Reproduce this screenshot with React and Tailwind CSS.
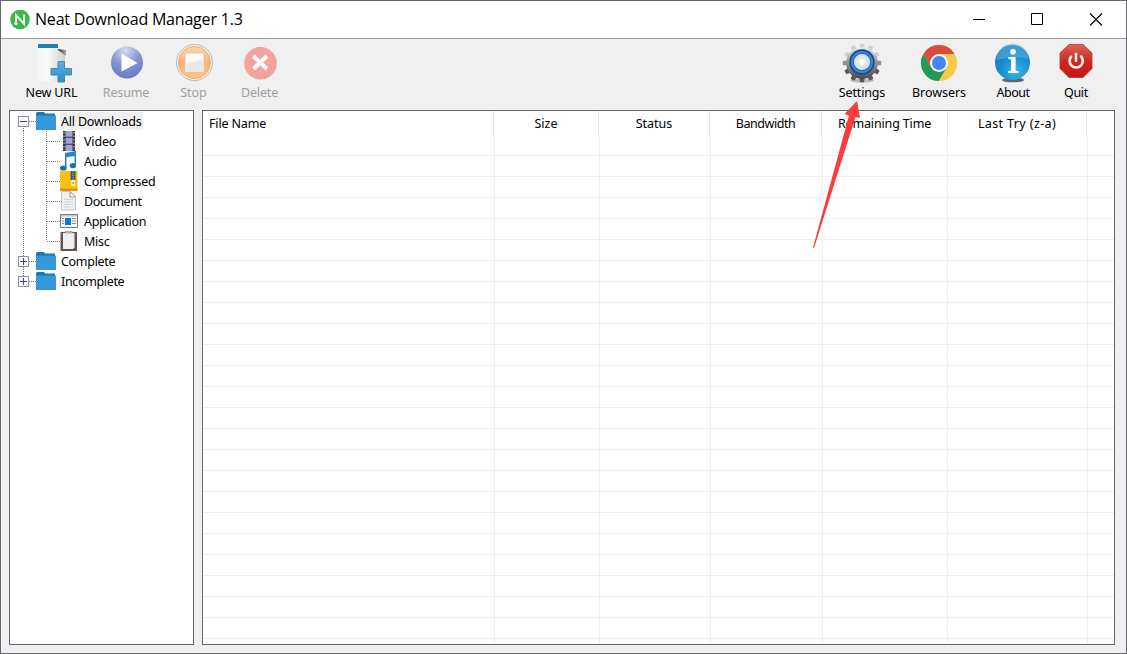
import React from 'react';

const tahoma = "font-['Noto_Sans',sans-serif]";

const NeatLogo = () => (
  <svg width="20" height="20" viewBox="0 0 20 20">
    <circle cx="10" cy="9.5" r="9.8" fill="#3eb549" />
    <path d="M6 12.5V5.2L14 14V4.6" fill="none" stroke="#e6f7e6" strokeWidth="2" />
    <circle cx="5.9" cy="13.6" r="1.7" fill="#e6f7e6" />
  </svg>
);

const NewUrlIcon = () => (
  <svg width="40" height="40" viewBox="0 0 40 40">
    <defs>
      <linearGradient id="page" x1="0" x2="1"><stop offset="0" stopColor="#f6f6f6" /><stop offset=".4" stopColor="#fafafa" /><stop offset="1" stopColor="#cfcfcf" /></linearGradient>
      <linearGradient id="fold" x1="0" x2="1"><stop offset="0" stopColor="#333" /><stop offset="1" stopColor="#aaa" /></linearGradient>
      <linearGradient id="plus" x1="0" y1="0" x2="0" y2="1"><stop offset="0" stopColor="#58b4e4" /><stop offset="1" stopColor="#2a8bc6" /></linearGradient>
    </defs>
    <path d="M6 1h20v6h7v31H6z" fill="url(#page)" />
    <path d="M6 1h20v4H6z" fill="#1d7db4" />
    <path d="M26 6l8 1v6l-8-6z" fill="url(#fold)" />
    <path d="M26 18.5h6.5v7h7v6.5h-7v7H26v-7h-7v-6.5h7z" fill="url(#plus)" stroke="#4a88a8" strokeWidth="1" />
  </svg>
);

const ResumeIcon = () => (
  <svg width="40" height="40" viewBox="0 0 40 40">
    <defs><radialGradient id="res" cx=".45" cy=".12" r=".9"><stop offset="0" stopColor="#d6dcf3" /><stop offset=".5" stopColor="#8797d2" /><stop offset="1" stopColor="#6878c6" /></radialGradient></defs>
    <circle cx="21" cy="19.5" r="16" fill="url(#res)" />
    <path d="M15.5 10.5v18L31.5 20z" fill="#fff" />
  </svg>
);

const StopIcon = () => (
  <svg width="40" height="40" viewBox="0 0 40 40">
    <defs><linearGradient id="stp" x1="0" y1="0" x2="0" y2="1"><stop offset="0" stopColor="#fbd5ad" /><stop offset=".5" stopColor="#f8b477" /><stop offset="1" stopColor="#fcc983" /></linearGradient></defs>
    <circle cx="20.5" cy="19.5" r="18" fill="#f4f1ee" stroke="#b9b9b9" strokeWidth="1" />
    <circle cx="20.5" cy="19.5" r="16" fill="url(#stp)" stroke="#f3a966" strokeWidth="1" />
    <path d="M11.5 10.5h18v18h-18z" fill="#fafafa" />
    <path d="M11.5 21l18-5v12.5h-18z" fill="#e9e9e9" />
  </svg>
);

const DeleteIcon = () => (
  <svg width="40" height="40" viewBox="0 0 40 40">
    <circle cx="20.5" cy="20.2" r="16.3" fill="#f3a29c" />
    <path d="M13.5 13L27 26M27 13L13.5 26" stroke="#fff" strokeWidth="4" />
  </svg>
);

const SettingsIcon = () => (
  <svg width="40" height="40" viewBox="0 0 40 40">
    <defs>
      <linearGradient id="gear" x1="0" y1="0" x2="0" y2="1"><stop offset="0" stopColor="#eeeeee" /><stop offset=".4" stopColor="#a0a0a0" /><stop offset="1" stopColor="#4c4c4c" /></linearGradient>
      <radialGradient id="hub"><stop offset="0" stopColor="#fff" /><stop offset="1" stopColor="#c9d6e4" /></radialGradient>
    </defs>
    <ellipse cx="20" cy="37.5" rx="12" ry="2" fill="#bbb" />
    {[0, 30, 60, 90, 120, 150, 180, 210, 240, 270, 300, 330].map((a) => (
      <path key={a} d="M17.4 5L18 .8h4l.6 4.2z" fill={a > 90 && a < 270 ? '#565656' : a === 90 || a === 270 ? '#909090' : '#d0d0d0'} transform={`rotate(${a} 20 20)`} />
    ))}
    <circle cx="20" cy="20" r="15.8" fill="url(#gear)" />
    <circle cx="20" cy="19" r="12.7" fill="#164b96" />
    <circle cx="20" cy="19" r="10" fill="none" stroke="#3b86d4" strokeWidth="2" />
    <circle cx="20" cy="19" r="8.3" fill="url(#hub)" />
    <circle cx="20" cy="19" r="3.6" fill="#fff" stroke="#cfdbe6" strokeWidth=".8" />
  </svg>
);

const ChromeIcon = () => (
  <svg width="40" height="40" viewBox="0 0 40 40">
    <circle cx="20" cy="20" r="18" fill="#fac84a" />
    <path d="M20 11H35.6A18 18 0 0 0 4.4 11L12.2 24.5z" fill="#db4a3e" />
    <path d="M4.4 11A18 18 0 0 0 20 38L27.8 24.5 12.2 24.5z" fill="#219a57" />
    <path d="M20 38A18 18 0 0 0 35.6 11H20L27.8 24.5z" fill="#fac84a" />
    <circle cx="20" cy="20" r="9" fill="#f5f5f5" />
    <circle cx="20" cy="20" r="7" fill="#4285f4" />
  </svg>
);

const AboutIcon = () => (
  <svg width="40" height="40" viewBox="0 0 40 40">
    <defs><radialGradient id="abt" cx=".6" cy=".75" r=".85"><stop offset="0" stopColor="#35b5ec" /><stop offset=".55" stopColor="#168bcb" /><stop offset="1" stopColor="#1874b4" /></radialGradient></defs>
    <ellipse cx="20" cy="37" rx="11" ry="2.3" fill="#666" />
    <circle cx="19.5" cy="19.5" r="17.5" fill="url(#abt)" />
    <path d="M3.5 17a16 16 0 0 1 32-1Q22 12 3.5 17z" fill="#62b8e3" opacity=".5" />
    <circle cx="20" cy="8.8" r="2.8" fill="#fff" />
    <path d="M15 14h7.6v13.5l3 .8V30H15v-1.7l3-.8V16.4l-3-.6z" fill="#fff" />
  </svg>
);

const QuitIcon = () => (
  <svg width="40" height="40" viewBox="0 0 40 40">
    <defs><linearGradient id="qt" x1="0" y1="0" x2="0" y2="1"><stop offset="0" stopColor="#dc6258" /><stop offset=".5" stopColor="#cb2a22" /><stop offset="1" stopColor="#c5120c" /></linearGradient></defs>
    <path d="M13 1.5h14L36 10v15.5l-9 9H13l-9-9V10z" fill="url(#qt)" stroke="#b73830" strokeWidth=".8" />
    <path d="M15.8 13a6.6 6.6 0 1 0 8.6-.2" fill="none" stroke="#fbeceb" strokeWidth="2.7" />
    <path d="M20 10v9" stroke="#fbeceb" strokeWidth="2.5" />
  </svg>
);

const Folder = () => (
  <svg width="20" height="20" viewBox="0 0 20 20">
    <path d="M0 2.5L1 1h7l1 1.5h10V6H0z" fill="#1c75b3" />
    <path d="M0 4.5h20V19H0z" fill="#3498db" />
  </svg>
);

const Video = () => (
  <svg width="20" height="20" viewBox="0 0 20 20">
    <path d="M3 0h12v20H3z" fill="#36363d" />
    <path d="M5.5 0h7v5.8h-7zM5.5 6.8h7v6h-7zM5.5 13.8h7V20h-7z" fill="#9ea0df" />
    <path d="M4 1v18M14 1v18" stroke="#ddd" strokeWidth="1" strokeDasharray="1.5 2" />
  </svg>
);

const Audio = () => (
  <svg width="20" height="20" viewBox="0 0 20 20">
    <path d="M5 2L16 0v14h-1.5V5L6.5 6.2V17H5z" fill="#2387bd" />
    <ellipse cx="3.3" cy="17" rx="3.3" ry="2.6" fill="#1672ae" />
    <ellipse cx="12.9" cy="14.5" rx="3.2" ry="2.6" fill="#1672ae" />
  </svg>
);

const Compressed = () => (
  <svg width="20" height="20" viewBox="0 0 20 20">
    <path d="M0 0h17.5v20H0z" fill="#fcc010" />
    <path d="M0 17.5h17.5V20H0z" fill="#e78c21" />
    <path d="M10.5 0h5v9h-5z" fill="#405a70" />
    <path d="M13 0v9" stroke="#a9c4d4" strokeDasharray="1 1" />
    <path d="M11.3 9h3.6v6h-3.6z" fill="#f5e8c4" />
    <path d="M12.6 11h1.2v2h-1.2z" fill="#ad9039" />
  </svg>
);

const Document = () => (
  <svg width="20" height="20" viewBox="0 0 20 20">
    <path d="M1.5.5H10L15.5 6v13h-14z" fill="#f0f0f0" stroke="#c4c4c4" />
    <path d="M10 .5V6h5.5z" fill="#fff" stroke="#999" />
    <path d="M4 8.5h9M4 11h9M4 13.5h9M4 16h7" stroke="#d2d2d2" />
  </svg>
);

const Application = () => (
  <svg width="20" height="20" viewBox="0 0 20 20">
    <path d="M.5 3.5h17v13H.5z" fill="#f6f8fa" stroke="#727d86" />
    <path d="M1 4h16v1.5H1z" fill="#c1c9ce" />
    <path d="M5 7h6v7H5z" fill="#0b78d8" />
    <path d="M2 7.5h2M2 10h2M2 12.5h2M12 7.5h4M12 10h4M12 12.5h4" stroke="#7f95a6" />
  </svg>
);

const Misc = () => (
  <svg width="20" height="20" viewBox="0 0 20 20">
    <path d="M.5 1H17v19H.5z" fill="#675348" />
    <path d="M3 2h11.5v14.5L13 18H3z" fill="#efeff1" />
    <path d="M5 0h7.5v2.5H5z" fill="#aaa" />
  </svg>
);

// One row's share of the dotted guide lines, with the expander box where the row has one.
const Guide = ({ kind }) => {
  if (kind === 'child' || kind === 'lastChild') {
    return (
      <svg width="50" height="20" viewBox="0 0 50 20" fill="none" shapeRendering="crispEdges">
        <path d={kind === 'child' ? 'M13.5 0v20M36.5 0v20M37 10.5h13' : 'M13.5 0v20M36.5 0v10M37 10.5h13'} stroke="#777" strokeDasharray="1 1" />
      </svg>
    );
  }
  return (
    <svg width="26" height="20" viewBox="0 0 26 20" fill="none" shapeRendering="crispEdges">
      <g stroke="#777" strokeDasharray="1 1">
        <path d="M19 10.5h7" />
        {kind === 'open' && <path d="M13.5 15v5" />}
        {kind === 'closed' && <path d="M13.5 0v20" />}
        {kind === 'last' && <path d="M13.5 0v6" />}
      </g>
      <path d="M8.5 5.5h10v10h-10z" fill="#f8f8f8" stroke="#919191" />
      <path d="M10 10.5h7" stroke="#30508f" />
      {kind !== 'open' && <path d="M13.5 7v7" stroke="#30508f" />}
    </svg>
  );
};

const tree = [
  { label: 'All Downloads', kind: 'open', Icon: Folder, text: 'ml-1 bg-[#f0f0f0] tracking-[-0.2px]' },
  { label: 'Video', kind: 'child', Icon: Video, text: 'ml-[3px] tracking-[-0.15px]' },
  { label: 'Audio', kind: 'child', Icon: Audio, text: 'ml-[3px] tracking-[-0.35px]' },
  { label: 'Compressed', kind: 'child', Icon: Compressed, text: 'ml-[3px] tracking-[-0.2px]' },
  { label: 'Document', kind: 'child', Icon: Document, text: 'ml-[3px] tracking-[-0.5px]' },
  { label: 'Application', kind: 'child', Icon: Application, text: 'ml-[3px] tracking-[-0.35px]' },
  { label: 'Misc', kind: 'lastChild', Icon: Misc, text: 'ml-[3px] tracking-[-0.25px]' },
  { label: 'Complete', kind: 'closed', Icon: Folder, text: 'ml-1 tracking-[-0.3px]' },
  { label: 'Incomplete', kind: 'last', Icon: Folder, text: 'ml-1 tracking-[-0.35px]' },
];

const columns = [
  { label: 'File Name', head: 'w-[291px] justify-start pl-1.5 tracking-[-0.15px]', body: 'w-[292px]' },
  { label: 'Size', head: 'w-[105px] justify-center', body: 'w-[105px]' },
  { label: 'Status', head: 'w-[111px] justify-center', body: 'w-[111px]' },
  { label: 'Bandwidth', head: 'w-[112px] justify-center tracking-[-0.45px]', body: 'w-[112px]' },
  { label: 'Remaining Time', head: 'w-[126px] justify-center tracking-[-0.15px]', body: 'w-[125px]' },
  { label: 'Last Try (z-a)', head: 'w-[139px] justify-center tracking-[0.38px]', body: 'w-[140px]' },
];

const Tool = ({ label, Icon, size }) => (
  <button className={`flex flex-col items-center ${size}`}>
    <Icon />
    <span className="mt-px h-[18px] whitespace-nowrap leading-[18px]">{label}</span>
  </button>
);

export default function App() {
  return (
    <div className={`relative flex h-[654px] w-[1127px] flex-col overflow-hidden border border-[#646872] bg-[#f0f0f0] text-[12.5px] text-black ${tahoma}`}>
      <header className="flex h-[38px] shrink-0 items-center border-b border-[#999] bg-white pl-[9px]">
        <NeatLogo />
        <h1 className="mb-px ml-[5px] flex-1 whitespace-nowrap font-['Open_Sans',sans-serif] text-[16px] tracking-[-0.2px]">Neat Download Manager 1.3</h1>
        <svg width="153" height="37" viewBox="0 0 153 37" fill="none" stroke="#000">
          <path d="M0 18.5h12" />
          <path d="M58.5 12.5h11v11h-11z" />
          <path d="M117 12.5l12 12M129 12.5l-12 12" strokeWidth="1.2" />
        </svg>
      </header>

      <nav className="flex h-[71px] shrink-0 pl-[17px] pt-[4px]">
        <Tool label="New URL" Icon={NewUrlIcon} size="w-[67px] tracking-[-0.15px]" />
        <Tool label="Resume" Icon={ResumeIcon} size="w-[82px] tracking-[-0.15px] text-[#a0a0a0]" />
        <Tool label="Stop" Icon={StopIcon} size="w-[53px] text-[#a0a0a0]" />
        <Tool label="Delete" Icon={DeleteIcon} size="w-[79px] tracking-[-0.15px] text-[#a0a0a0]" />
        <div className="w-[524px]" />
        <Tool label="Settings" Icon={SettingsIcon} size="w-[78px] tracking-[-0.15px]" />
        <Tool label="Browsers" Icon={ChromeIcon} size="w-[76px] tracking-[-0.05px]" />
        <Tool label="About" Icon={AboutIcon} size="w-[72px] tracking-[-0.45px]" />
        <Tool label="Quit" Icon={QuitIcon} size="w-[54px] tracking-[-0.3px]" />
      </nav>

      <main className="flex h-[535px] gap-2 pl-2">
        <aside className="w-[185px] border border-[#64646a] bg-white">
          {tree.map(({ label, kind, Icon, text }) => (
            <div key={label} className="flex h-5 items-center">
              <Guide kind={kind} />
              <Icon />
              <span className={`flex h-[18px] items-center whitespace-nowrap px-[1px] pt-[2px] ${text}`}>{label}</span>
            </div>
          ))}
        </aside>

        <section className="flex w-[913px] flex-col border border-[#64646a] bg-white">
          <div className="flex h-[25px] shrink-0">
            {columns.map(({ label, head }) => (
              <div key={label} className={`flex shrink-0 items-center whitespace-nowrap border-r border-[#e5e5e5] pt-[2px] ${head}`}>{label}</div>
            ))}
          </div>
          <div className="flex flex-1 flex-col overflow-hidden">
            {Array.from({ length: 25 }, (_, row) => (
              <div key={row} className={`flex shrink-0 border-b border-[#efefef] ${row === 0 ? 'h-[20px]' : 'h-[21px]'}`}>
                {columns.map(({ label, body }) => (
                  <div key={label} className={`shrink-0 border-r border-[#efefef] ${body}`} />
                ))}
              </div>
            ))}
          </div>
        </section>
      </main>

      <svg className="pointer-events-none absolute left-[799px] top-[89px]" width="80" height="165" viewBox="0 0 80 165">
        <path d="M57 11L60 28 55.5 27 14 158 13 157.5 49 25.500 44.500 24z" fill="#fb3b3c" />
      </svg>
    </div>
  );
}
